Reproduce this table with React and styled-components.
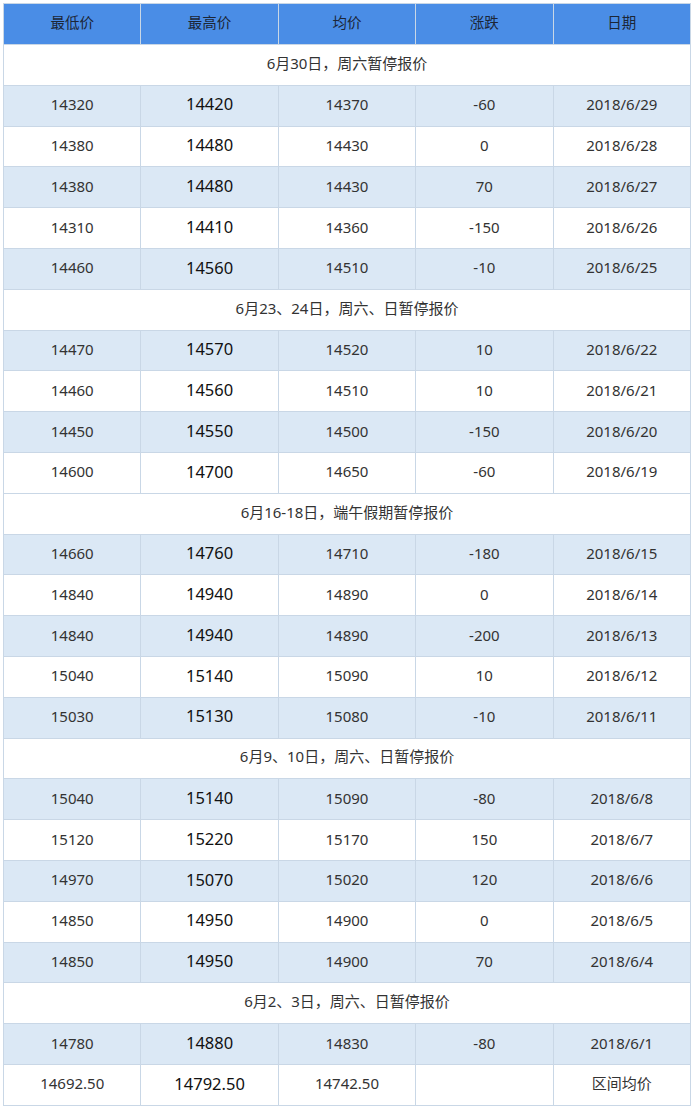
import React from "react";
import styled, { createGlobalStyle } from "styled-components";

const Global = createGlobalStyle`
  html, body { margin: 0; padding: 0; background: #fff; }
  body { font-family: "Noto Sans", "Noto Sans CJK SC", sans-serif; color: #333; }
`;

const Wrap = styled.div`
  padding: 3px 0 0 3px;
`;

const Table = styled.table`
  border-collapse: collapse;
  table-layout: fixed;
  width: 688px;
`;

const HeadCell = styled.th`
  background: #4a8de6;
  color: #1c2636;
  font-weight: 400;
  font-size: 14.5px;
  height: 35px;
  padding: 0 0 5px;
  border: 1px solid #c9d7e6;
  text-align: center;
  vertical-align: middle;
`;

const Row = styled.tr`
  height: 40.8px;
  background: ${(p) => (p.$shade ? "#dbe8f5" : "#ffffff")};
`;

const Cell = styled.td`
  border: 1px solid #c9d7e6;
  padding: 0 0 2px;
  text-align: center;
  vertical-align: middle;
  font-size: ${(p) => (p.$big ? "16.5px" : "15px")};
  color: ${(p) => (p.$big ? "#111" : "#333")};
  line-height: 1;
`;

const GroupCell = styled.td`
  border: 1px solid #c9d7e6;
  padding: 0 0 5px;
  text-align: center;
  vertical-align: middle;
  font-size: 15px;
  color: #333;
  background: #fff;
`;

const groups = [
  {
    title: "6月30日，周六暂停报价",
    rows: [
      ["14320", "14420", "14370", "-60", "2018/6/29"],
      ["14380", "14480", "14430", "0", "2018/6/28"],
      ["14380", "14480", "14430", "70", "2018/6/27"],
      ["14310", "14410", "14360", "-150", "2018/6/26"],
      ["14460", "14560", "14510", "-10", "2018/6/25"],
    ],
  },
  {
    title: "6月23、24日，周六、日暂停报价",
    rows: [
      ["14470", "14570", "14520", "10", "2018/6/22"],
      ["14460", "14560", "14510", "10", "2018/6/21"],
      ["14450", "14550", "14500", "-150", "2018/6/20"],
      ["14600", "14700", "14650", "-60", "2018/6/19"],
    ],
  },
  {
    title: "6月16-18日，端午假期暂停报价",
    rows: [
      ["14660", "14760", "14710", "-180", "2018/6/15"],
      ["14840", "14940", "14890", "0", "2018/6/14"],
      ["14840", "14940", "14890", "-200", "2018/6/13"],
      ["15040", "15140", "15090", "10", "2018/6/12"],
      ["15030", "15130", "15080", "-10", "2018/6/11"],
    ],
  },
  {
    title: "6月9、10日，周六、日暂停报价",
    rows: [
      ["15040", "15140", "15090", "-80", "2018/6/8"],
      ["15120", "15220", "15170", "150", "2018/6/7"],
      ["14970", "15070", "15020", "120", "2018/6/6"],
      ["14850", "14950", "14900", "0", "2018/6/5"],
      ["14850", "14950", "14900", "70", "2018/6/4"],
    ],
  },
  {
    title: "6月2、3日，周六、日暂停报价",
    rows: [
      ["14780", "14880", "14830", "-80", "2018/6/1"],
      ["14692.50", "14792.50", "14742.50", "", "区间均价"],
    ],
  },
];

const headers = ["最低价", "最高价", "均价", "涨跌", "日期"];

export default function App() {
  return (
    <>
      <Global />
      <Wrap>
        <Table>
          <thead>
            <tr>
              {headers.map((h) => (
                <HeadCell key={h}>{h}</HeadCell>
              ))}
            </tr>
          </thead>
          <tbody>
            {groups.map((g) => (
              <React.Fragment key={g.title}>
                <Row>
                  <GroupCell colSpan={5}>{g.title}</GroupCell>
                </Row>
                {g.rows.map((r, i) => (
                  <Row key={i} $shade={i % 2 === 0}>
                    {r.map((v, j) => (
                      <Cell key={j} $big={j === 1}>
                        {v}
                      </Cell>
                    ))}
                  </Row>
                ))}
              </React.Fragment>
            ))}
          </tbody>
        </Table>
      </Wrap>
    </>
  );
}
